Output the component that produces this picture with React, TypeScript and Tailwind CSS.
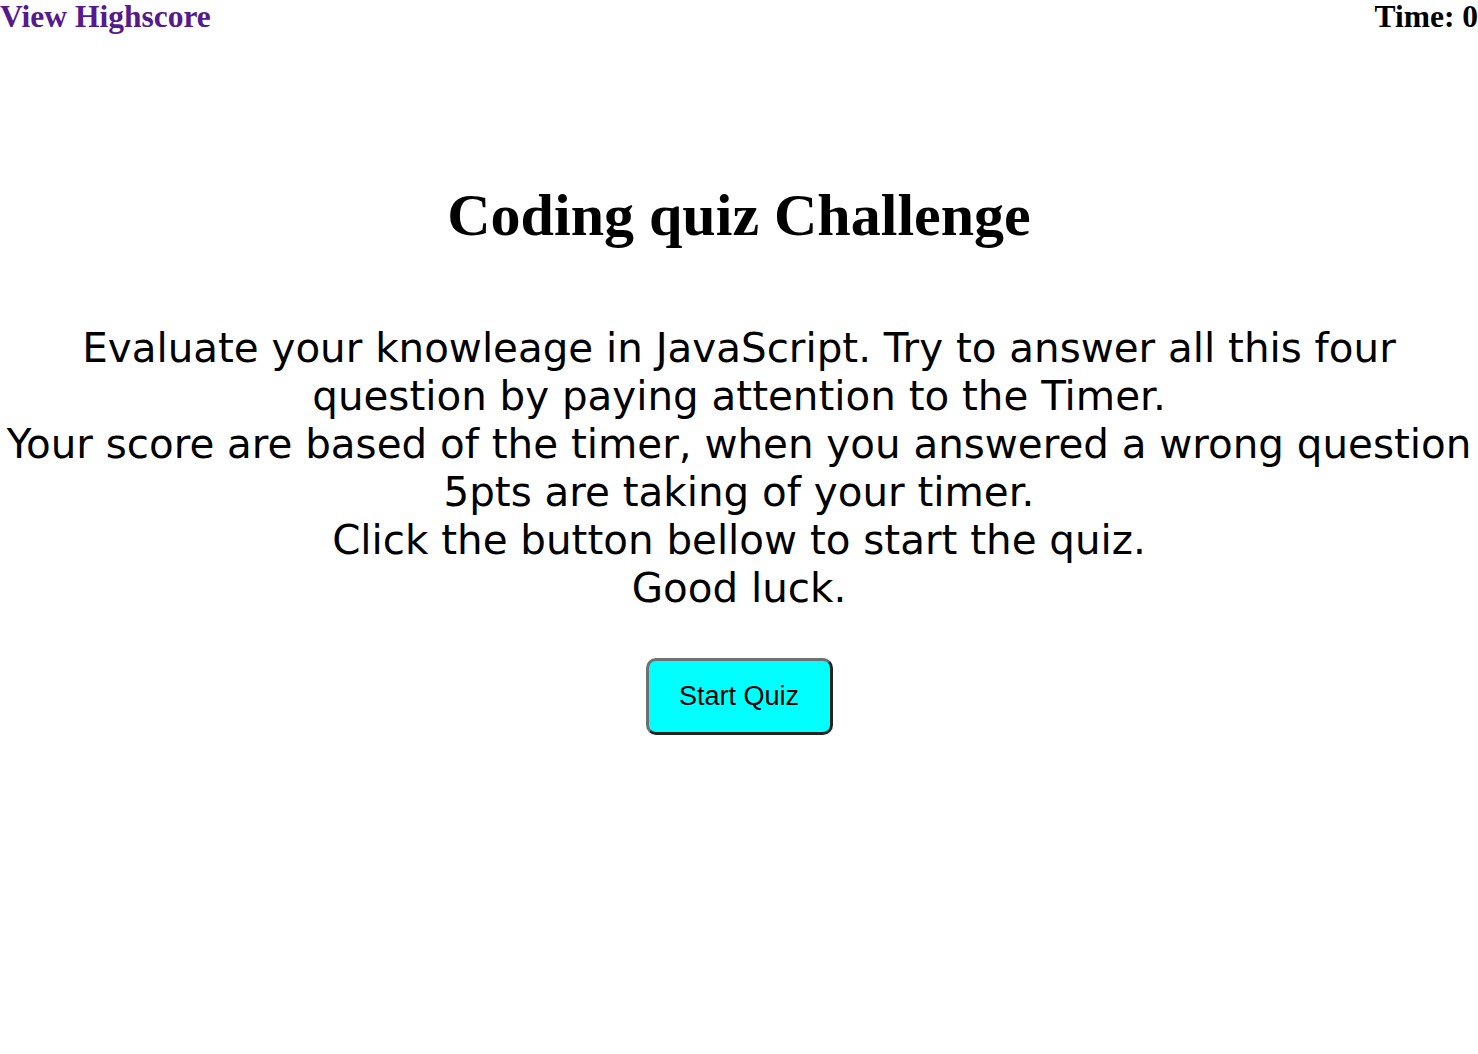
import React from "react";

export default function App() {
  return (
    <div className="min-h-screen bg-white text-black">
      <header className="flex items-start justify-between font-['Liberation_Serif',serif] font-bold text-[31.5px] leading-[34px]">
        <a href="#" className="text-[#551a8b]">View Highscore</a>
        <span>Time: 0</span>
      </header>

      <main className="flex flex-col items-center text-center">
        <h1 className="mt-[146px] font-['Liberation_Serif',serif] font-bold text-[60px] leading-[70px]">
          Coding quiz Challenge
        </h1>

        <p className="mt-[74px] font-['DejaVu_Sans',sans-serif] text-[40.4px] leading-[48px] whitespace-nowrap">
          Evaluate your knowleage in JavaScript. Try to answer all this four
          <br />
          question by paying attention to the Timer.
          <br />
          Your score are based of the timer, when you answered a wrong question
          <br />
          5pts are taking of your timer.
          <br />
          Click the button bellow to start the quiz.
          <br />
          Good luck.
        </p>

        <button
          type="button"
          className="mt-[46px] w-[187px] h-[77px] rounded-[10px] border-[3px] border-solid border-t-[#707070] border-l-[#707070] border-r-[#222] border-b-[#222] bg-[#00ffff] font-['Liberation_Sans',sans-serif] text-[27px] text-black"
        >
          Start Quiz
        </button>
      </main>
    </div>
  );
}
